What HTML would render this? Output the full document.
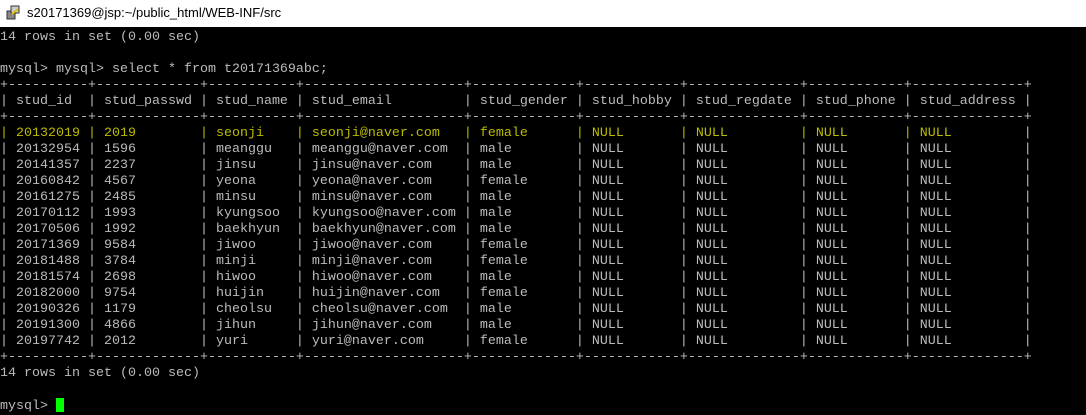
<!DOCTYPE html>
<html><head><meta charset="utf-8"><style>
html,body{margin:0;padding:0;width:1086px;height:410px;overflow:hidden;background:#000}
#title{position:absolute;left:0;top:0;width:1086px;height:27px;background:#fff;}
#title span{position:absolute;left:27px;top:5px;font:13px "Liberation Sans",sans-serif;color:#000}
#icon{position:absolute;left:6px;top:5px;width:15px;height:15px}
pre{position:absolute;left:0;top:30px;margin:0;font-family:"Liberation Mono",monospace;font-size:13.33px;line-height:16px;color:#bbbbbb;white-space:pre}
.y{color:#bbbb00}
.cur{display:inline-block;width:8px;height:14px;background:#00ff00;vertical-align:-3px}
</style></head><body>
<div id="title"><svg id="icon" viewBox="0 0 15 15"><rect x="1" y="6" width="8" height="8" fill="#888" stroke="#333"/><rect x="5" y="1" width="8" height="7" fill="#ccc" stroke="#333"/><path d="M6 9 L12 4" stroke="#e0c000" stroke-width="2"/></svg><span>s20171369@jsp:~/public_html/WEB-INF/src</span></div>
<pre>14 rows in set (0.00 sec)

mysql&gt; mysql&gt; select * from t20171369abc;
+----------+-------------+-----------+--------------------+-------------+------------+--------------+------------+--------------+
| stud_id  | stud_passwd | stud_name | stud_email         | stud_gender | stud_hobby | stud_regdate | stud_phone | stud_address |
+----------+-------------+-----------+--------------------+-------------+------------+--------------+------------+--------------+
<span class="y">| 20132019 | 2019        | seonji    | seonji@naver.com   | female      | NULL       | NULL         | NULL       | NULL         </span>|
| 20132954 | 1596        | meanggu   | meanggu@naver.com  | male        | NULL       | NULL         | NULL       | NULL         |
| 20141357 | 2237        | jinsu     | jinsu@naver.com    | male        | NULL       | NULL         | NULL       | NULL         |
| 20160842 | 4567        | yeona     | yeona@naver.com    | female      | NULL       | NULL         | NULL       | NULL         |
| 20161275 | 2485        | minsu     | minsu@naver.com    | male        | NULL       | NULL         | NULL       | NULL         |
| 20170112 | 1993        | kyungsoo  | kyungsoo@naver.com | male        | NULL       | NULL         | NULL       | NULL         |
| 20170506 | 1992        | baekhyun  | baekhyun@naver.com | male        | NULL       | NULL         | NULL       | NULL         |
| 20171369 | 9584        | jiwoo     | jiwoo@naver.com    | female      | NULL       | NULL         | NULL       | NULL         |
| 20181488 | 3784        | minji     | minji@naver.com    | female      | NULL       | NULL         | NULL       | NULL         |
| 20181574 | 2698        | hiwoo     | hiwoo@naver.com    | male        | NULL       | NULL         | NULL       | NULL         |
| 20182000 | 9754        | huijin    | huijin@naver.com   | female      | NULL       | NULL         | NULL       | NULL         |
| 20190326 | 1179        | cheolsu   | cheolsu@naver.com  | male        | NULL       | NULL         | NULL       | NULL         |
| 20191300 | 4866        | jihun     | jihun@naver.com    | male        | NULL       | NULL         | NULL       | NULL         |
| 20197742 | 2012        | yuri      | yuri@naver.com     | female      | NULL       | NULL         | NULL       | NULL         |
+----------+-------------+-----------+--------------------+-------------+------------+--------------+------------+--------------+
14 rows in set (0.00 sec)

mysql&gt; <span class="cur"></span></pre>
</body></html>
